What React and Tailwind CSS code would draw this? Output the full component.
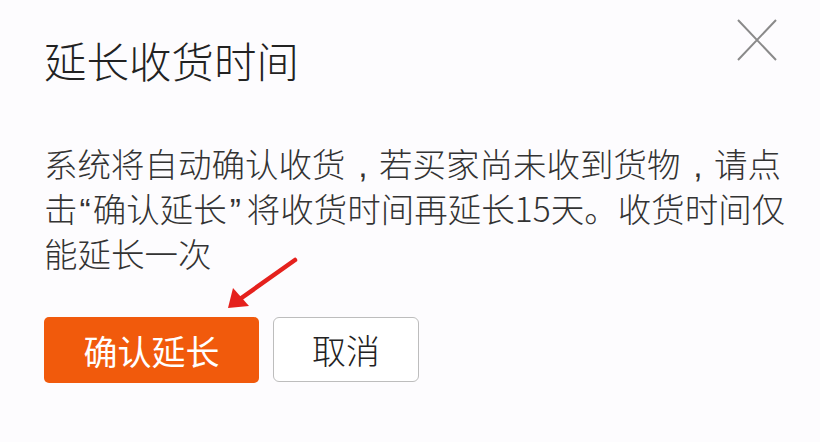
import React from "react";

export default function App() {
  const font = { fontFamily: '"Noto Sans CJK SC", "Noto Sans", sans-serif' };
  const Q = ({ children, cls }) => (
    <span className={cls} style={{ fontFamily: '"Liberation Sans", Arial, sans-serif' }}>{children}</span>
  );
  const Comma = () => (
    <span className="inline-block w-[1em] pl-[0.38em] text-left" style={{ fontFamily: '"Liberation Sans", Arial, sans-serif' }}>,</span>
  );
  return (
    <div className="relative w-[820px] h-[442px] bg-[#fdfcfe] overflow-hidden" style={font}>
      <div className="flex flex-col pl-[44px] pt-[34px]">
        <h1 className="text-[42.5px] leading-[52px] font-light text-[#222] whitespace-nowrap">延长收货时间</h1>
        <div className="mt-[54px] text-[33.5px] leading-[45px] font-light text-[#333]">
          <div className="h-[45px] whitespace-nowrap">系统将自动确认收货<Comma />若买家尚未收到货物<Comma />请点</div>
          <div className="h-[45px] whitespace-nowrap">击<Q cls="ml-[2px] mr-[2px]">“</Q>确认延长<Q cls="ml-[3px] mr-[6px]">”</Q>将收货时间再延长15天。收货时间仅</div>
          <div className="h-[45px] whitespace-nowrap">能延长一次</div>
        </div>
        <div className="mt-[42px] flex gap-[14px]">
          <button className="w-[215px] h-[66px] rounded-[5px] bg-[#f15a0c] text-white text-[34px] font-normal flex items-center justify-center">确认延长</button>
          <button className="w-[146px] h-[65px] rounded-[6px] border border-[#bdbdbd] bg-white text-[#222] text-[34px] font-light flex items-center justify-center">取消</button>
        </div>
      </div>
      <svg className="absolute left-[736px] top-[19px]" width="42" height="43" viewBox="0 0 42 43">
        <path d="M2 1 L40 41 M40 1 L2 41" stroke="#8a8a8a" strokeWidth="2" fill="none" />
      </svg>
      <svg className="absolute left-0 top-0 pointer-events-none" width="820" height="442" viewBox="0 0 820 442">
        <line x1="295" y1="260" x2="240" y2="299" stroke="#e5211d" strokeWidth="4.5" strokeLinecap="round" />
        <polygon points="228,308 233,288 249,306" fill="#e5211d" />
      </svg>
    </div>
  );
}
